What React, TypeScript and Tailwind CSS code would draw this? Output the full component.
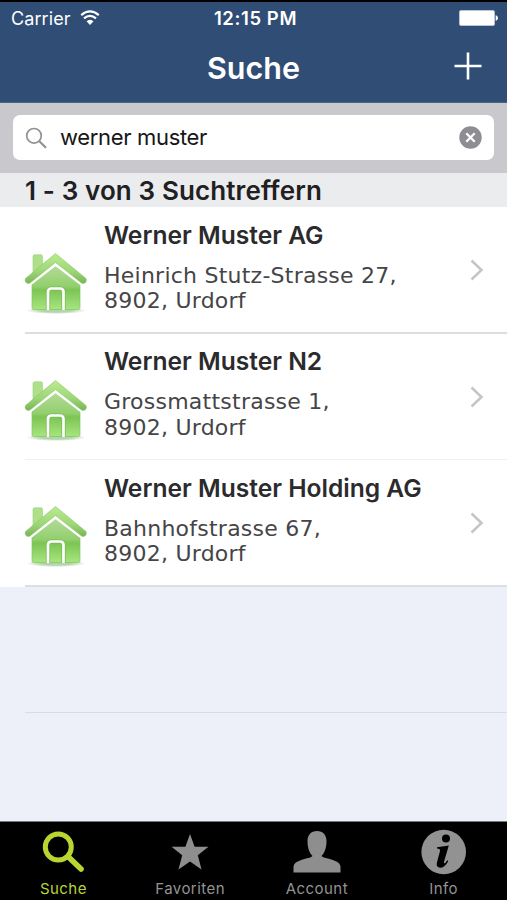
import type { ReactNode } from "react";

const results = [
  { id: 1, name: "Werner Muster AG", street: "Heinrich Stutz-Strasse 27,", city: "8902, Urdorf", border: "bg-[#dcdddf]" },
  { id: 2, name: "Werner Muster N2", street: "Grossmattstrasse 1,", city: "8902, Urdorf", border: "bg-[#f1f1f2]" },
  { id: 3, name: "Werner Muster Holding AG", street: "Bahnhofstrasse 67,", city: "8902, Urdorf", border: "bg-[#dce0e6]" },
];

const HouseIcon = () => (
  <svg width="64" height="64" viewBox="0 0 64 64" className="shrink-0">
    <defs>
      <linearGradient id="wall" x1="0" y1="0" x2="0" y2="1">
        <stop offset="0" stopColor="#b4dc98" />
        <stop offset="0.48" stopColor="#93cf6e" />
        <stop offset="0.56" stopColor="#7dc454" />
        <stop offset="1" stopColor="#a6e67e" />
      </linearGradient>
      <linearGradient id="roof" x1="0" y1="0" x2="0" y2="1">
        <stop offset="0" stopColor="#baec90" />
        <stop offset="0.6" stopColor="#9dd677" />
        <stop offset="1" stopColor="#78b455" />
      </linearGradient>
      <radialGradient id="shade">
        <stop offset="0.5" stopColor="#b4d4ac" />
        <stop offset="1" stopColor="#b4d4ac" stopOpacity="0" />
      </radialGradient>
    </defs>
    <ellipse cx="32" cy="57.500" rx="30" ry="3.500" fill="url(#shade)" />
    <path d="M9 3.500Q9 1.800 10.500 1.800H17Q18.500 1.800 18.500 3.500V14L9 22z" fill="#aee089" stroke="#9bd077" strokeWidth="0.6" />
    <path d="M8 31L31.500 12L56 31V55Q56 56.500 54.500 56.500H9.500Q8 56.500 8 55z" fill="url(#wall)" stroke="#84c262" strokeWidth="0.7" />
    <path d="M4.500 31L31.500 10L59 31" fill="none" stroke="#fff" strokeWidth="5" />
    <path d="M31.500 0.500L62 25.500Q63 27.500 61.500 29.500Q59.500 31.200 57.500 30L31.500 9.500L6 30Q4 31.200 2 29.500Q.5 27.500 1.500 25.500Z" fill="url(#roof)" stroke="#8cc569" strokeWidth="0.6" />
    <path d="M24 57V39Q24 35.500 27.500 35.500H36Q39.500 35.500 39.500 39V57" fill="none" stroke="#7aba57" strokeWidth="4.200" />
    <path d="M24 57V39Q24 35.500 27.500 35.500H36Q39.500 35.500 39.500 39V57" fill="none" stroke="#fff" strokeWidth="2.700" />
  </svg>
);

const StatusBar = () => (
  <div className="flex h-8 items-center justify-between pl-[11px] pr-[7px] text-[18px] leading-8">
    <div className="flex w-[160px] items-center gap-[9px]">
      <span className="pt-px tracking-[0.1px]">Carrier</span>
      <svg width="20" height="15" viewBox="0 0 20 15" className="mb-px">
        <path d="M1.200 5.200Q10-2.400 18.800 5.200" fill="none" stroke="#fff" strokeWidth="2.200" />
        <path d="M4 8.400Q10 3.400 16 8.400" fill="none" stroke="#fff" strokeWidth="2.200" />
        <path d="M6.500 11.300Q10 8 13.500 11.300L10 15z" fill="#fff" />
      </svg>
    </div>
    <span className="text-[18.5px] font-semibold tracking-[0.6px]">12:15 PM</span>
    <div className="flex w-[160px] justify-end pr-0.5">
      <svg width="39" height="16" viewBox="0 0 39 16">
        <rect x="0.500" y="0.500" width="35" height="15" rx="1.500" fill="#fff" stroke="#b9c4d6" />
        <path d="M36.700 5Q39 6 39 8Q39 10 36.700 11z" fill="#fff" />
      </svg>
    </div>
  </div>
);

const SearchBar = () => (
  <div className="h-[70px] bg-[#c9c8cd] px-[13px] pt-3">
    <div className="flex h-[45px] items-center rounded-[7px] bg-white pl-3 pr-[12px]">
      <svg width="22" height="22" viewBox="0 0 22 22" fill="none" stroke="#929295">
        <circle cx="9" cy="8.800" r="7.300" strokeWidth="1.700" />
        <path d="M14.300 14.200L21 20.800" strokeWidth="2.200" />
      </svg>
      <span className="ml-[13px] flex-1 pb-px text-[22px] leading-[44px] tracking-[-0.33px] text-[#161616]">werner muster</span>
      <svg width="23" height="23" viewBox="0 0 23 23">
        <circle cx="11.500" cy="11.500" r="11.200" fill="#8e8e92" />
        <path d="M7.300 7.300L15.700 15.700M15.700 7.300L7.300 15.700" stroke="#fff" strokeWidth="2.300" />
      </svg>
    </div>
  </div>
);

const Tab = ({ label, active, children }: { label: string; active?: boolean; children: ReactNode }) => (
  <div className={active ? "flex flex-1 flex-col items-center text-[#b9d532]" : "flex flex-1 flex-col items-center text-[#939393]"}>
    <div className="flex h-[57px] items-center pt-[3px]">{children}</div>
    <span className="text-[15px] leading-[20px] tracking-[0.45px]">{label}</span>
  </div>
);

const App = () => {
  return (
    <div className="flex h-[900px] w-[507px] flex-col overflow-hidden bg-[#edf0f8] font-['Inter','Liberation_Sans',sans-serif]">
      <header className="h-[103px] shrink-0 border-b border-t-2 border-b-[#4d6585] border-t-black bg-[#304d75] text-white">
        <StatusBar />
        <div className="grid h-[68px] grid-cols-[1fr_auto_1fr] items-center">
          <span />
          <h1 className="text-[30.5px] font-semibold leading-[68px]">Suche</h1>
          <svg width="28" height="28" viewBox="0 0 28 28" className="mb-1 mr-[25px] justify-self-end">
            <path d="M14 0.500V27.500M0.500 14H27.500" stroke="#fff" strokeWidth="2.600" />
          </svg>
        </div>
      </header>

      <SearchBar />

      <h2 className="h-[34px] shrink-0 bg-[#ebecee] pl-[25px] text-[26px] font-semibold leading-[36px] tracking-[0.12px] text-[#1f2022]">
        1 - 3 von 3 Suchtreffern
      </h2>

      <ul>
        {results.map((item) => (
          <li key={item.id} className="flex h-[126.5px] flex-col bg-white">
            <div className="flex flex-1">
              <div className="w-[104px] pl-6 pt-[46px]">
                <HouseIcon />
              </div>
              <div className="flex-1 pt-[13.5px]">
                <p className="text-[24.6px] font-semibold leading-[28px] text-[#2b2b2d]">{item.name}</p>
                <p className="mt-[14px] font-['DejaVu_Sans',sans-serif] text-[22px] leading-[25.5px] tracking-[0.24px] text-[#454547]">
                  {item.street}
                  <br />
                  {item.city}
                </p>
              </div>
              <svg width="14" height="22" viewBox="0 0 14 22" className="mr-[23px] mt-[52px]">
                <path d="M1.500 1.500L11.500 11L1.500 20.500" fill="none" stroke="#c5c5c9" strokeWidth="2.500" />
              </svg>
            </div>
            <div className="pl-[25px]">
              <div className={`h-[1.5px] ${item.border}`} />
            </div>
          </li>
        ))}
      </ul>
      <div className="ml-[25px] h-[126.5px] shrink-0 border-b border-[#d9dce3]" />

      <nav className="mt-auto flex h-[79px] shrink-0 border-t border-[#77797c] bg-black">
        <Tab label="Suche" active>
          <svg width="44" height="44" viewBox="0 0 44 44" fill="none" stroke="#b9d532">
            <circle cx="17.300" cy="17" r="13" strokeWidth="5" />
            <path d="M27 26.500L40 39" strokeWidth="5.600" strokeLinecap="round" />
          </svg>
        </Tab>
        <Tab label="Favoriten">
          <svg width="38" height="36" viewBox="0 0 38 36">
            <path d="M19 0L23.600 12.800H37.500L26.800 21.300L30.500 35.500L19 27.600L7.500 35.500L11.200 21.300L.5 12.800H14.400Z" fill="#8e8e8e" />
          </svg>
        </Tab>
        <Tab label="Account">
          <svg width="48" height="42" viewBox="0 0 48 42">
            <path d="M24 0C30 0 33.500 4 33.500 10C33.500 17 31.500 22 28.500 25Q30 26.500 35 27.500C42 29.500 47.500 31.500 47.500 36V41.500H.5V36C.5 31.500 6 29.500 13 27.500Q18 26.500 19.500 25C16.500 22 14.500 17 14.500 10C14.500 4 18 0 24 0Z" fill="#8e8e8e" />
          </svg>
        </Tab>
        <Tab label="Info">
          <svg width="46" height="46" viewBox="0 0 46 46">
            <circle cx="22.700" cy="23" r="22.300" fill="#929292" />
            <circle cx="25" cy="9.500" r="4" fill="#000" />
            <path d="M16 18.200L27.800 16.600L23 32.800Q22.600 35 24.400 34L26.200 31.300L27.300 32.200Q23.500 38.800 19.300 38.800Q14.800 38.300 15.900 33.700L19 22Q19.500 19.600 16 19.500Z" fill="#000" />
          </svg>
        </Tab>
      </nav>
    </div>
  );
};

export default App;
